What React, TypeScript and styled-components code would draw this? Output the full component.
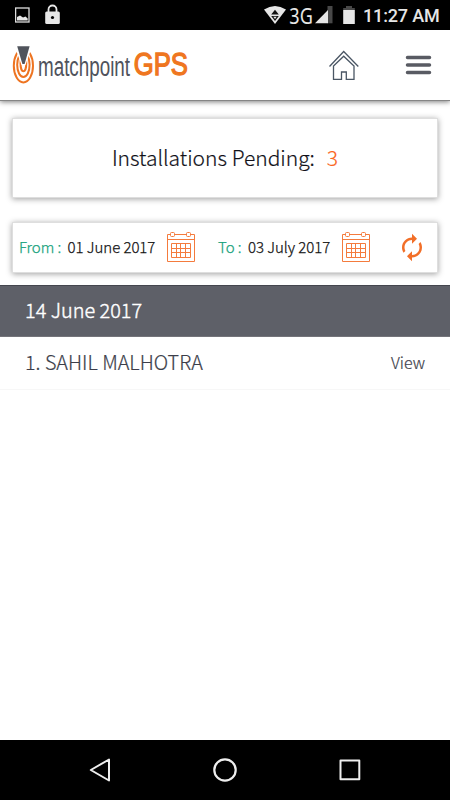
import React from "react";
import styled, { createGlobalStyle } from "styled-components";

const GlobalStyle = createGlobalStyle`
  * { box-sizing: border-box; }
  body {
    margin: 0;
    background: #fff;
    font-family: "Noto Sans CJK SC", "Noto Sans", sans-serif;
    font-weight: 300;
  }
`;

const Screen = styled.div`
  width: 450px;
  height: 800px;
  display: flex;
  flex-direction: column;
  overflow: hidden;
  background: #fff;
`;

const StatusBar = styled.div`
  height: 30px;
  flex: none;
  display: flex;
  align-items: center;
  padding: 0 11px 0 15px;
  background: #000;
  color: #e6e6e6;
`;

const StatusGroup = styled.div<{ $end?: boolean }>`
  display: flex;
  align-items: center;
  height: 30px;
  margin-left: ${(p) => (p.$end ? "auto" : "0")};
`;

const Clock = styled.span`
  width: 76px;
  margin-left: 8px;
  font: 500 18px/30px Roboto, sans-serif;
  letter-spacing: -0.15px;
  white-space: nowrap;
  padding-top: 1px;
`;

const Header = styled.header`
  height: 71px;
  flex: none;
  display: flex;
  align-items: center;
  padding: 0 18px 0 12px;
  border-bottom: 1px solid #858585;
  box-shadow: 0 1px 5px rgba(0, 0, 0, 0.5);
`;

const IconButton = styled.button<{ $gap?: number }>`
  display: flex;
  border: 0;
  padding: 0;
  background: none;
  margin-left: ${(p) => (p.$gap ? `${p.$gap}px` : "auto")};
`;

const Content = styled.main`
  flex: 1;
  padding-top: 17px;
`;

const Card = styled.section<{ $height: number }>`
  height: ${(p) => p.$height}px;
  margin: 0 12px 24px;
  display: flex;
  align-items: center;
  background: #fff;
  border: 1px solid #dedede;
  box-shadow: 0 1px 6px rgba(0, 0, 0, 0.38);
`;

const Summary = styled(Card)`
  justify-content: center;
  padding-bottom: 2px;
  font-size: 21px;
  line-height: 30px;
  color: #101018;
  -webkit-text-stroke: 0.2px;
`;

const Count = styled.span`
  margin-left: 12px;
  color: #fa6420;
`;

const Filters = styled(Card)`
  margin-bottom: 12px;
  padding: 0 10px 2px 6px;
  font-size: 15px;
  line-height: 24px;
  letter-spacing: -0.05px;
  color: #111;
  white-space: nowrap;
  -webkit-text-stroke: 0.25px;
`;

const DateField = styled.div<{ $width: number }>`
  width: ${(p) => p.$width}px;
  display: flex;
  align-items: center;
  margin-right: 22px;

  svg {
    margin: 1px 0 0 auto;
  }
`;

const FieldLabel = styled.span`
  margin-right: 6.5px;
  color: #16a27c;
`;

const GroupTitle = styled.h2`
  margin: 0;
  height: 52px;
  padding-left: 25px;
  border-top: 1px solid #44464e;
  border-bottom: 1px solid #74747a;
  background: #5e6068;
  color: #fff;
  font-size: 19.9px;
  font-weight: 300;
  line-height: 48px;
  -webkit-text-stroke: 0.4px;
`;

const Row = styled.div`
  height: 53px;
  display: flex;
  justify-content: space-between;
  align-items: center;
  padding: 0 25px 2px;
  border-bottom: 1px solid #f7f7f7;
  color: #3c3e4a;
  font-size: 19.8px;
  line-height: 30px;
  -webkit-text-stroke: 0.2px;
`;

const ViewLink = styled.a`
  font-size: 16px;
`;

const NavBar = styled.nav`
  height: 60px;
  flex: none;
  display: flex;
  align-items: center;
  justify-content: space-between;
  padding: 0 87px;
  background: #000;
`;

const Logo = () => (
  <svg width="190" height="60" viewBox="12 35 190 60">
    <g fill="none" stroke="#ee7421" strokeWidth="2">
      <ellipse cx="23.4" cy="65.8" rx="9.6" ry="16.7" />
      <ellipse cx="23.4" cy="64.8" rx="6.2" ry="12.2" />
      <ellipse cx="23.4" cy="63.5" rx="2.9" ry="7.8" />
    </g>
    <path d="M12 43H35V47L31.2 49L25.5 65H21.5L15.6 49L12 47Z" fill="#fff" />
    <path d="M17.2 46.3H29.6L24.6 64H22.4Z" fill="#50545c" />
    <g transform="translate(38 75.5) scale(0.672 1)">
      <text textLength="137" lengthAdjust="spacingAndGlyphs" fontFamily="Liberation Sans, sans-serif" fontWeight="400" fontSize="28" fill="#50535c">matchpoint</text>
    </g>
    <g transform="translate(133.7 75.4) scale(0.86 1)">
      <text textLength="63" lengthAdjust="spacingAndGlyphs" fontFamily="Liberation Sans, sans-serif" fontWeight="400" fontSize="30.5" fill="#ef7620" stroke="#ef7620" strokeWidth="1.3">GPS</text>
    </g>
  </svg>
);

const Calendar = () => (
  <svg width="30" height="32" viewBox="0 0 30 32" fill="none" stroke="#f47b3d" strokeWidth="1">
    <path d="M4 3.5H1.5V30.5H28.5V3.5H25M8.5 3.5H20.5M1.5 8.5H28.5" />
    <rect x="4.5" y="1.5" width="4" height="4" rx="1" />
    <rect x="20.5" y="1.5" width="4" height="4" rx="1" />
    <path d="M5.5 12.5H24.5V26.5H5.5ZM5.5 17.5H24.5M5.5 21.5H24.5M10.5 12.5V26.5M14.5 12.5V26.5M19.5 12.5V26.5" />
  </svg>
);

export default function App() {
  return (
    <>
      <GlobalStyle />
      <Screen>
        <StatusBar>
          <StatusGroup>
            <svg width="46" height="30" viewBox="15 0 46 30">
              <rect x="15.6" y="8" width="13.4" height="14" fill="none" stroke="#ddd" strokeWidth="1.3" />
              <path d="M17 20.5V17L20 15.5L23 17.5L25.5 16.5L27.7 18.5V20.5Z" fill="#e6e6e6" />
              <path d="M48.5 12V9.5a4 4 0 0 1 8 0V12" fill="none" stroke="#e6e6e6" strokeWidth="1.8" />
              <rect x="45.2" y="11.5" width="14.6" height="12.5" rx="1.5" fill="#e6e6e6" />
              <circle cx="52.5" cy="17.5" r="1.6" fill="#000" />
            </svg>
          </StatusGroup>
          <StatusGroup $end>
            <svg width="92" height="30" viewBox="263 0 92 30">
              <path d="M264 9.5Q275 2.5 286 9.5L275 24Z" fill="#e6e6e6" />
              <path d="M275 9.8L278.8 14.5H271.2ZM271.2 16H278.8L275 21Z" fill="#111" />
              <path d="M273.3 16.7H276.7L275 19Z" fill="#e6e6e6" />
              <text x="289.3" y="23.5" textLength="23.5" lengthAdjust="spacingAndGlyphs" fontFamily="Noto Sans, sans-serif" fontWeight="400" fontSize="22.5" fill="#e6e6e6">3G</text>
              <path d="M327.5 6H332.5V23.3H327.5Z" fill="#484848" />
              <path d="M315 23.3L328 10V23.3Z" fill="#e6e6e6" />
              <path d="M343.2 10V8H346V6H352V8H354.8V10Z" fill="#484848" />
              <rect x="343.2" y="10" width="11.6" height="14" fill="#e6e6e6" />
            </svg>
            <Clock>11:27 AM</Clock>
          </StatusGroup>
        </StatusBar>
        <Header>
          <Logo />
          <IconButton aria-label="Home">
            <svg width="32" height="34" viewBox="328 48 32 34" fill="none" stroke="#4a5664" strokeWidth="1.3">
              <path d="M329.5 66.5L343.7 51.5L358.3 66.5M333.5 66V79.3H341.5V72H346.3V79.3H354V66L343.7 56.2Z" />
            </svg>
          </IconButton>
          <IconButton aria-label="Menu" $gap={45}>
            <svg width="27" height="20" viewBox="0 0 27 20" stroke="#595b63" strokeWidth="3.5" strokeLinecap="round">
              <path d="M2.5 2.5H24.5M2.5 10H24.5M2.5 17.5H24.5" />
            </svg>
          </IconButton>
        </Header>
        <Content>
          <Summary $height={80}>
            <span>Installations Pending:</span>
            <Count>3</Count>
          </Summary>
          <Filters $height={51}>
            <DateField $width={177}>
              <FieldLabel>From :</FieldLabel>
              <span>01 June 2017</span>
              <Calendar />
            </DateField>
            <DateField $width={153}>
              <FieldLabel>To :</FieldLabel>
              <span>03 July 2017</span>
              <Calendar />
            </DateField>
            <IconButton aria-label="Refresh">
              <svg width="30" height="30" viewBox="0 -0.3 24 24" fill="#f26f28">
                <path d="M12 6v3l4-4-4-4v3c-4.42 0-8 3.58-8 8 0 1.57.46 3.03 1.24 4.26L6.7 14.8c-.45-.83-.7-1.79-.7-2.8 0-3.31 2.69-6 6-6zm6.76 1.74L17.3 9.2c.44.84.7 1.79.7 2.8 0 3.31-2.69 6-6 6v-3l-4 4 4 4v-3c4.42 0 8-3.58 8-8 0-1.57-.46-3.03-1.24-4.26z" />
              </svg>
            </IconButton>
          </Filters>
          <GroupTitle>14 June 2017</GroupTitle>
          <Row>
            <span>1. SAHIL MALHOTRA</span>
            <ViewLink>View</ViewLink>
          </Row>
        </Content>
        <NavBar>
          <svg width="26" height="30" viewBox="0 0 26 30" fill="none" stroke="#eee" strokeWidth="2" strokeLinejoin="round">
            <path d="M3.8 15L22 4.5V25.5Z" />
          </svg>
          <svg width="26" height="30" viewBox="0 0 26 30" fill="none" stroke="#eee" strokeWidth="2.2">
            <circle cx="13" cy="15" r="10.7" />
          </svg>
          <svg width="26" height="30" viewBox="0 0 26 30" fill="none" stroke="#eee" strokeWidth="2" strokeLinejoin="round">
            <rect x="3.5" y="5.5" width="18.8" height="18.8" />
          </svg>
        </NavBar>
      </Screen>
    </>
  );
}
